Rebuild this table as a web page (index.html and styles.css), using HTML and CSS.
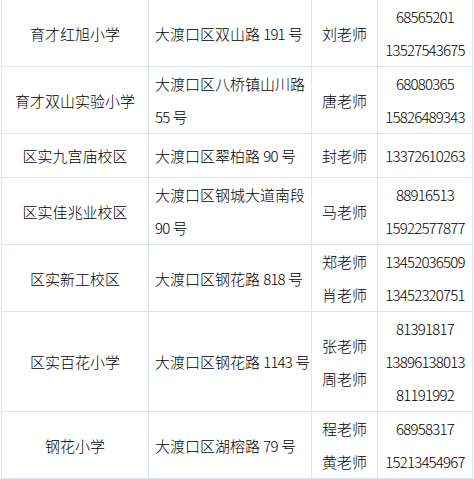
FILE: index.html
```html
<!DOCTYPE html>
<html lang="zh-CN">
<head>
<meta charset="utf-8">
<title>学校联系表</title>
<link rel="stylesheet" href="styles.css">
</head>
<body>
<table class="schools">
  <colgroup>
    <col class="c-name">
    <col class="c-addr">
    <col class="c-teacher">
    <col class="c-phone">
  </colgroup>
  <tbody>
    <tr>
      <td class="name">育才红旭小学</td>
      <td class="addr">大渡口区双山路 <span class="num">191</span> 号</td>
      <td class="teacher">刘老师</td>
      <td class="phone">68565201<br>13527543675</td>
    </tr>
    <tr>
      <td class="name">育才双山实验小学</td>
      <td class="addr">大渡口区八桥镇山川路<br><span class="num">55</span> 号</td>
      <td class="teacher">唐老师</td>
      <td class="phone">68080365<br>15826489343</td>
    </tr>
    <tr class="short">
      <td class="name">区实九宫庙校区</td>
      <td class="addr">大渡口区翠柏路 <span class="num">90</span> 号</td>
      <td class="teacher">封老师</td>
      <td class="phone">13372610263</td>
    </tr>
    <tr>
      <td class="name">区实佳兆业校区</td>
      <td class="addr">大渡口区钢城大道南段<br><span class="num">90</span> 号</td>
      <td class="teacher">马老师</td>
      <td class="phone">88916513<br>15922577877</td>
    </tr>
    <tr>
      <td class="name">区实新工校区</td>
      <td class="addr">大渡口区钢花路 <span class="num">818</span> 号</td>
      <td class="teacher">郑老师<br>肖老师</td>
      <td class="phone">13452036509<br>13452320751</td>
    </tr>
    <tr>
      <td class="name">区实百花小学</td>
      <td class="addr">大渡口区钢花路 <span class="num">1143</span> 号</td>
      <td class="teacher">张老师<br>周老师</td>
      <td class="phone">81391817<br>13896138013<br>81191992</td>
    </tr>
    <tr>
      <td class="name">钢花小学</td>
      <td class="addr">大渡口区湖榕路 <span class="num">79</span> 号</td>
      <td class="teacher">程老师<br>黄老师</td>
      <td class="phone">68958317<br>15213454967</td>
    </tr>
  </tbody>
</table>
</body>
</html>
```

FILE: styles.css
```css
html, body {
  margin: 0;
  padding: 0;
  background: #ffffff;
}

body {
  font-family: "Noto Sans CJK SC", "Noto Sans", sans-serif;
  font-size: 15px;
  font-weight: 300;
  color: #000000;
  overflow: hidden;
}

.schools {
  border-collapse: collapse;
  table-layout: fixed;
  width: 471px;
  margin: -1px 0 0 1px;
}

.c-name { width: 147px; }
.c-addr { width: 163px; }
.c-teacher { width: 66px; }
.c-phone { width: 95px; }

.schools td {
  border: 1px solid #dce3f2;
  padding: 0;
  line-height: 33px;
  vertical-align: middle;
  text-align: center;
  white-space: nowrap;
  overflow: hidden;
}

.schools tr {
  height: 66px;
}

.schools tr.short {
  height: 44px;
}

.schools td.addr {
  text-align: left;
  padding-left: 6px;
}

.num {
  letter-spacing: -0.9px;
}

.schools td.phone {
  letter-spacing: -0.8px;
}
```
